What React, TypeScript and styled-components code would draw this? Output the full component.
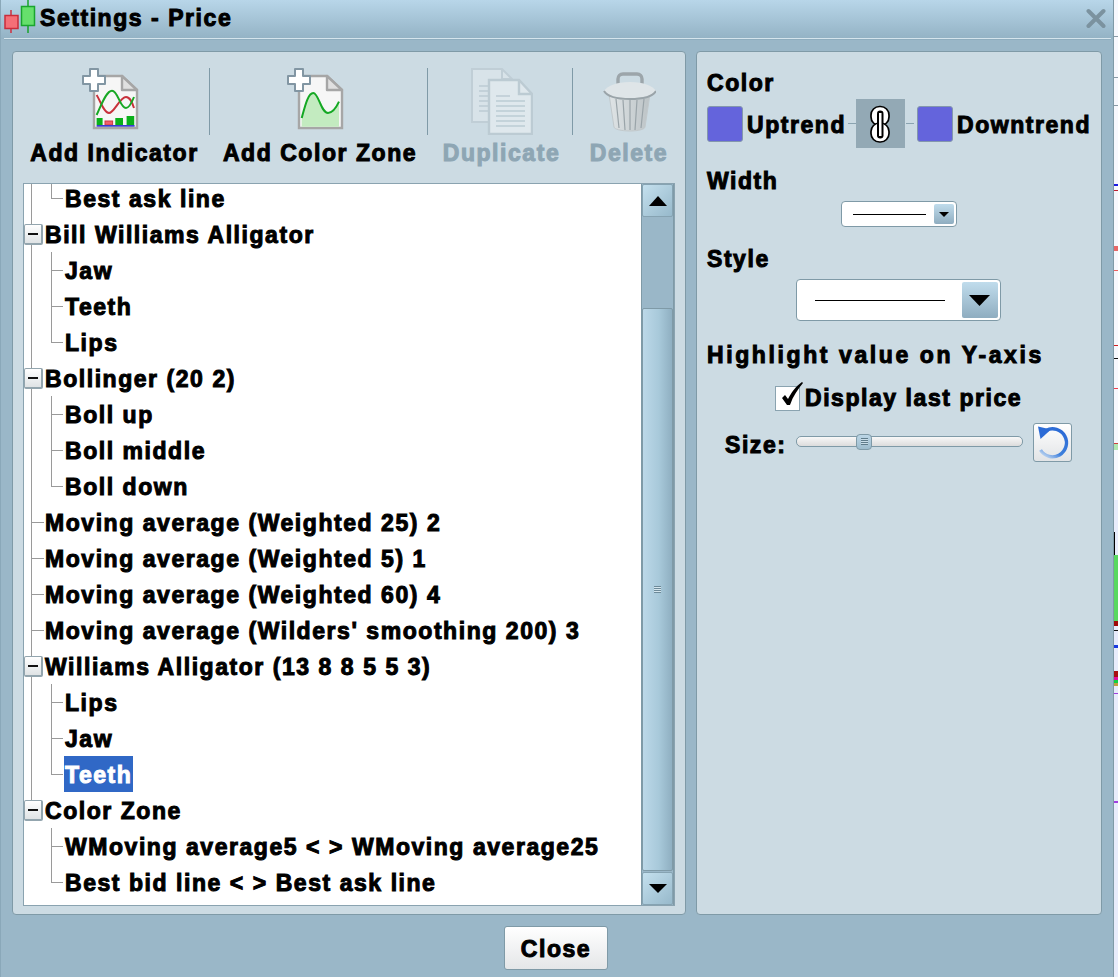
import React from "react";
import styled, { createGlobalStyle } from "styled-components";

const Global = createGlobalStyle`
  html, body { margin: 0; padding: 0; height: 100%; overflow: hidden; background: #9ab7c8; }
  * { box-sizing: border-box; }
  body { font-family: "Liberation Sans", Arial, sans-serif; }
`;

const heavy = `
  font-family: "Liberation Sans", Arial, sans-serif;
  font-weight: 700;
  font-size: 23px;
  letter-spacing: 1.55px;
  -webkit-text-stroke: 1px currentColor;
  white-space: nowrap;
  color: #000;
`;

const Page = styled.div`
  display: flex;
  width: 1118px;
  height: 977px;
`;
const Dialog = styled.div`
  width: 1114px;
  height: 977px;
  display: flex;
  flex-direction: column;
  background: #9ab7c8;
  border-right: 1px solid #7f9aa7;
  border-left: 1px solid #8aa8b9;
`;
const ChartEdge = styled.svg`
  width: 4px;
  height: 977px;
  display: block;
  flex: none;
`;
const TitleBar = styled.div`
  height: 39px;
  flex: none;
  display: flex;
  align-items: center;
  padding: 0 7px 3px 3px;
  background: linear-gradient(#b8d6e9, #93b2c4);
`;
const TitleText = styled.span`
  ${heavy}
  margin-left: 4px;
  flex: 1;
`;
const Rule = styled.div`
  height: 2px;
  flex: none;
  margin: -1px 2px 0 3px;
  background: #d4e4ec;
  border-bottom: 1px solid #8fadbe;
`;
const Body = styled.div`
  flex: none;
  height: 875px;
  display: flex;
  gap: 10px;
  padding: 11px 11px 0 11px;
`;
const Panel = styled.div`
  background: #ccdbe3;
  border: 1px solid #7f9aa7;
  border-radius: 4px;
`;
const LeftPanel = styled(Panel)`
  width: 674px;
  display: flex;
  flex-direction: column;
  padding: 0 10px 8px;
`;
const RightPanel = styled(Panel)`
  width: 406px;
  padding: 0 10px;
  display: flex;
  flex-direction: column;
`;
const Toolbar = styled.div`
  height: 131px;
  flex: none;
  display: flex;
  margin: 0 -10px;
  padding-top: 16px;
  padding-left: 7px;
`;
const Tool = styled.div<{ $w: number; $shift?: number }>`
  width: ${(p) => p.$w}px;
  padding-left: ${(p) => p.$shift ?? 0}px;
  display: flex;
  flex-direction: column;
  align-items: center;
  flex: none;
`;
const ToolIcon = styled.div`
  height: 67px;
  display: flex;
  align-items: flex-start;
  svg { display: block; }
`;
const ToolLabel = styled.div<{ $off?: boolean }>`
  ${heavy}
  margin-top: 3px;
  line-height: 30px;
  ${(p) => (p.$off ? "color: #8ea6b4;" : "")}
`;
const ToolSep = styled.div`
  width: 1px;
  height: 67px;
  flex: none;
  background: #7f9aa7;
`;
const Tree = styled.div`
  flex: 1;
  min-height: 0;
  display: flex;
  border: 1px solid #8aa3b0;
  background: #fff;
`;
const TreeList = styled.div`
  flex: 1;
  overflow: hidden;
`;
const TreeInner = styled.div`
  margin-top: -4px;
`;
const Row = styled.div<{ $child?: boolean }>`
  ${heavy}
  position: relative;
  height: 36px;
  line-height: 38px;
  padding-left: ${(p) => (p.$child ? 40 : 20)}px;
`;
const Trunk = styled.i<{ $half?: boolean }>`
  position: absolute;
  left: 7px;
  top: 0;
  width: 1px;
  height: ${(p) => (p.$half ? "18px" : "36px")};
  background: #9a9a9a;
`;
const BranchV = styled.i<{ $last?: boolean }>`
  position: absolute;
  left: 27px;
  top: 0;
  width: 1px;
  height: ${(p) => (p.$last ? "19px" : "36px")};
  background: #9a9a9a;
`;
const BranchH = styled.i<{ $x: number; $w: number }>`
  position: absolute;
  left: ${(p) => p.$x}px;
  top: 18px;
  width: ${(p) => p.$w}px;
  height: 1px;
  background: #9a9a9a;
`;
const Expander = styled.b`
  position: absolute;
  left: 0;
  top: 8px;
  width: 19px;
  height: 21px;
  border: 1px solid #93a5ae;
  border-right-width: 2px;
  border-bottom-width: 2px;
  border-radius: 2px;
  background: linear-gradient(#ffffff, #dfe3e5);
  &::after {
    content: "";
    position: absolute;
    left: 3px;
    top: 8px;
    width: 10px;
    height: 2px;
    background: #111;
  }
`;
const RowLabel = styled.span<{ $on?: boolean }>`
  display: inline-block;
  height: 36px;
  padding: 0 1px;
  ${(p) => (p.$on ? "background: #3068c6; color: #fff;" : "")}
`;
const Scroll = styled.div`
  width: 33px;
  flex: none;
  display: flex;
  flex-direction: column;
  background: #9ab7c8;
  border-left: 1px solid #7f9aa7;
  border-right: 1px solid #7f9aa7;
`;
const ScrollBtn = styled.div`
  height: 33px;
  flex: none;
  display: flex;
  align-items: center;
  justify-content: center;
  background: linear-gradient(135deg, #c4e0ee, #97b9cb);
  border: 1px solid #86a3b2;
  border-radius: 2px;
  svg { display: block; }
`;
const ScrollGap = styled.div`
  height: 91px;
  flex: none;
  background: #9ab7c8;
`;
const ScrollThumb = styled.div`
  flex: 1;
  display: flex;
  align-items: center;
  justify-content: center;
  background: linear-gradient(90deg, #bcd8e8, #a8c9da 55%, #8fafc1);
  border: 1px solid #7f9aa7;
  border-radius: 2px;
  margin-bottom: 1px;
`;
const Grip = styled.div`
  width: 7px;
  height: 7px;
  background: repeating-linear-gradient(#6d8a99 0 1px, #d5e6ee 1px 2px);
`;
const Heading = styled.div<{ $h: number; $mt: number; $wide?: boolean }>`
  ${heavy}
  height: ${(p) => p.$h}px;
  line-height: ${(p) => p.$h}px;
  margin-top: ${(p) => p.$mt}px;
  ${(p) => (p.$wide ? "letter-spacing: 2.6px;" : "")}
`;
const ColorRow = styled.div`
  display: flex;
  align-items: center;
  height: 49px;
  margin-top: 1px;
`;
const Swatch = styled.div<{ $gap?: number }>`
  width: 36px;
  height: 36px;
  flex: none;
  margin-left: ${(p) => p.$gap ?? 0}px;
  background: #6464dc;
  border: 1px solid #8397ad;
  border-radius: 3px;
`;
const ColorLabel = styled.span<{ $w: number }>`
  ${heavy}
  width: ${(p) => p.$w}px;
  flex: none;
  margin-left: 4px;
  padding-top: 4px;
`;
const Dash = styled.div<{ $gap: number }>`
  width: 8px;
  height: 1px;
  flex: none;
  margin-top: -1px;
  margin-left: ${(p) => p.$gap}px;
  background: #8aa3b0;
`;
const LinkBox = styled.div`
  width: 49px;
  height: 49px;
  flex: none;
  background: #93a9b5;
  svg { display: block; }
`;
const Select = styled.div<{ $w: number; $h: number; $pad: number; $nudge?: number }>`
  align-self: center;
  width: ${(p) => p.$w}px;
  height: ${(p) => p.$h}px;
  display: flex;
  align-items: center;
  flex: none;
  margin-top: 5px;
  margin-right: ${(p) => p.$nudge ?? 0}px;
  background: #fff;
  border: 1px solid #7f9aa7;
  border-radius: 4px;
  padding: 2px 2px 2px ${(p) => p.$pad}px;
`;
const SelectLine = styled.div<{ $gap: number }>`
  flex: 1;
  height: 1px;
  background: #000;
  margin-right: ${(p) => p.$gap}px;
`;
const SelectBtn = styled.div<{ $w: number }>`
  width: ${(p) => p.$w}px;
  height: 100%;
  flex: none;
  display: flex;
  align-items: center;
  justify-content: center;
  border-radius: 2px;
  background: linear-gradient(#c0dcec, #8fadc0);
  svg { display: block; }
`;
const CheckRow = styled.div`
  display: flex;
  align-items: center;
  height: 36px;
  margin-top: 10px;
  padding-left: 68px;
`;
const CheckBox = styled.div`
  position: relative;
  width: 25px;
  height: 25px;
  flex: none;
  margin-top: 1px;
  background: #fff;
  border: 1px solid #8aa3b0;
  svg { position: absolute; left: 2px; top: -6px; display: block; }
`;
const CheckLabel = styled.span`
  ${heavy}
  margin-left: 5px;
`;
const SizeRow = styled.div`
  display: flex;
  align-items: center;
  height: 40px;
  margin-top: 5px;
  padding-left: 18px;
`;
const SizeLabel = styled.span`
  ${heavy}
  width: 71px;
  flex: none;
  padding-top: 9px;
`;
const Slider = styled.div`
  position: relative;
  width: 227px;
  height: 11px;
  flex: none;
  border: 1px solid #7f9aa7;
  border-radius: 5px;
  background: linear-gradient(#f8f8f8, #dcdcdc);
`;
const SliderThumb = styled.div`
  position: absolute;
  left: 59px;
  top: -3px;
  width: 16px;
  height: 16px;
  display: flex;
  align-items: center;
  justify-content: center;
  border: 1px solid #7f9aa7;
  border-radius: 4px;
  background: linear-gradient(#bcd6e6, #9dbccd);
`;
const ThumbGrip = styled.div`
  width: 7px;
  height: 7px;
  background: repeating-linear-gradient(#5f7c8b 0 1px, #c9dde8 1px 2px);
`;
const ResetButton = styled.div`
  width: 39px;
  height: 39px;
  flex: none;
  margin-left: 10px;
  margin-top: 3px;
  border: 1px solid #7f9aa7;
  border-radius: 3px;
  background: linear-gradient(#ffffff, #e2e4e6);
  svg { display: block; }
`;
const Footer = styled.div`
  flex: 1;
  display: flex;
  justify-content: center;
  padding-top: 11px;
  padding-right: 2px;
`;
const CloseButton = styled.div`
  ${heavy}
  width: 104px;
  height: 44px;
  line-height: 44px;
  text-align: center;
  border: 1px solid #7f9aa7;
  border-radius: 3px;
  background: linear-gradient(#ffffff, #e4e6e8);
`;
const CandleSvg = styled.svg`
  display: block;
  flex: none;
  align-self: flex-start;
`;
const CloseSvg = styled.svg`
  display: block;
  flex: none;
`;
const BinSvg = styled.svg`
  margin-top: 4px;
`;

const CandleIcon = () => (
  <CandleSvg width="32" height="34" viewBox="0 0 32 34">
    <path d="M7 10v23" stroke="#cf2f3f" strokeWidth="1.5" />
    <rect x="1" y="15.5" width="13" height="13" fill="#f46f77" stroke="#c92c3b" strokeWidth="1.5" />
    <path d="M24 0v33" stroke="#17a32a" strokeWidth="1.5" />
    <rect x="17.5" y="6.5" width="13" height="19" fill="#66e06c" stroke="#1aa52e" strokeWidth="1.5" />
  </CandleSvg>
);

const Doc = () => (
  <>
    <path d="M12 8h28l15 14v38H12z" fill="#f6f6f6" stroke="#a6a6a6" strokeWidth="2.4" />
    <path d="M40 8v14h15z" fill="#e0e0e0" stroke="#a6a6a6" strokeWidth="2.4" strokeLinejoin="round" />
  </>
);
const Plus = () => (
  <path
    d="M8 1h8v7h7v8h-7v7H8v-7H1V8h7z"
    fill="#fff"
    stroke="#8296a3"
    strokeWidth="2"
    strokeLinejoin="round"
  />
);

const AddIndicatorIcon = () => (
  <svg width="66" height="64" viewBox="0 0 66 64">
    <Doc />
    <path d="M14.6 27C18 32 22 45 27 45S38 29 44 29C48 29 50 34 52 40" fill="none" stroke="#c8323c" strokeWidth="2" />
    <path d="M14.6 47C19 38 24 22.7 30 22.7S38 40 44 40C47 40 50 34 52 29" fill="none" stroke="#18a825" strokeWidth="2" />
    <rect x="14.6" y="50" width="6" height="7" fill="#0ab01a" />
    <rect x="23" y="53" width="7.6" height="4" fill="#f0606a" stroke="#cc3a44" />
    <rect x="33.3" y="50" width="7.7" height="7" fill="#0ab01a" />
    <rect x="44.6" y="48" width="7.6" height="9" fill="#0ab01a" />
    <rect x="14.6" y="57" width="38" height="1.7" fill="#3a3ad0" />
    <Plus />
  </svg>
);
const AddZoneIcon = () => (
  <svg width="66" height="64" viewBox="0 0 66 64">
    <Doc />
    <path d="M14.7 50C18 38 21 25 26.3 25S34 45 41 45C46 45 50 38 52 33.7V58.7H14.7z" fill="#c3ebc0" />
    <path d="M14.7 50C18 38 21 25 26.3 25S34 45 41 45C46 45 50 38 52 33.7" fill="none" stroke="#14a823" strokeWidth="2" />
    <Plus />
  </svg>
);
const DuplicateIcon = () => (
  <svg width="62" height="67" viewBox="0 0 62 67">
    <path d="M1 1h30l10 10v43H1z" fill="#d8e3e9" stroke="#c0ced6" strokeWidth="2" />
    <path d="M31 1v10h10" fill="none" stroke="#c0ced6" strokeWidth="2" />
    <path d="M8 18h10M8 23h10M8 28h10M8 33h10M8 38h10M8 43h10" stroke="#bccbd3" strokeWidth="1.5" />
    <path d="M18 12h30l13 14v40H18z" fill="#dfe8ed" stroke="#bccbd3" strokeWidth="2.4" />
    <path d="M48 12v14h13" fill="none" stroke="#bccbd3" strokeWidth="2.4" />
    <path d="M25 28h14" stroke="#bccbd3" strokeWidth="1.5" />
    <path d="M25 33h29M25 38h29M25 43h29M25 48h29M25 53h29M25 58h29" stroke="#bccbd3" strokeWidth="1.6" />
  </svg>
);
const DeleteIcon = () => (
  <BinSvg width="53" height="60" viewBox="0 0 53 60">
    <defs>
      <linearGradient id="bin" x1="0" x2="1" y1="0" y2="0">
        <stop offset="0" stopColor="#dfe4e6" />
        <stop offset="1" stopColor="#bcc3c6" />
      </linearGradient>
    </defs>
    <path d="M15 15V7c0-3 2-5 5-5h14c3 0 5 2 5 5v8" fill="none" stroke="#9ca5aa" strokeWidth="3.4" />
    <path d="M6 22l5 33c0 2 7 4 16 4s15-2 15-4l5-33z" fill="url(#bin)" stroke="#c2c9cc" />
    <path d="M1 19c3-5 12-9 26-9s23 4 26 9c-3 5-13 7-26 7S4 24 1 19z" fill="#dfe5e8" />
    <path d="M1 19c3 5 13 8 26 8s23-3 26-8" fill="none" stroke="#9aa4a9" strokeWidth="2" />
    <path d="M13 27l3 29M20 28l2 30M27 28v30M34 28l-2 30M41 27l-3 29" stroke="#9aa4a9" strokeWidth="1.2" />
  </BinSvg>
);
const Tri = ({ w, h, up }: { w: number; h: number; up?: boolean }) => (
  <svg width={w} height={h} viewBox={`0 0 ${w} ${h}`}>
    <path d={up ? `M0 ${h}L${w / 2} 0L${w} ${h}z` : `M0 0H${w}L${w / 2} ${h}z`} fill="#000" />
  </svg>
);
const LinkIcon = () => (
  <svg width="49" height="49" viewBox="0 0 49 49">
    <rect x="15" y="7.5" width="18" height="19" rx="8.5" fill="#fff" stroke="#000" strokeWidth="1.7" />
    <rect x="15" y="24" width="18" height="19" rx="8.5" fill="#fff" stroke="#000" strokeWidth="1.7" />
    <rect x="21" y="11.5" width="6.5" height="28" rx="3.2" fill="#000" />
    <rect x="23" y="14" width="2.5" height="23" fill="#fff" />
  </svg>
);
const CheckIcon = () => (
  <svg width="26" height="28" viewBox="0 0 26 28">
    <path d="M4 17l3-3 3 4C13 12 18 5 24 1l1 1C20 8 15 15 12 24H9z" fill="#000" />
  </svg>
);
const ResetIcon = () => (
  <svg width="37" height="37" viewBox="0 0 37 37">
    <defs>
      <linearGradient id="arc" x1="0.7" y1="0" x2="0.1" y2="1">
        <stop offset="0" stopColor="#2b6bd6" />
        <stop offset="0.65" stopColor="#3f80dc" />
        <stop offset="1" stopColor="#c8dcf2" />
      </linearGradient>
    </defs>
    <path d="M12 6.4A14 14 0 1 1 6.5 26" fill="none" stroke="url(#arc)" strokeWidth="3.4" />
    <path d="M4 2.5L17 5.5 6.5 15z" fill="#2b6bd6" />
  </svg>
);
const CloseX = () => (
  <CloseSvg width="20" height="21" viewBox="0 0 20 21">
    <path d="M2.5 3l15 15M17.5 3l-15 15" stroke="#7b929f" strokeWidth="4" strokeLinecap="round" />
  </CloseSvg>
);

type Item = { t: string; kind: "root" | "leaf" | "child"; last?: boolean; on?: boolean };
const items: Item[] = [
  { t: "Best ask line", kind: "child", last: true },
  { t: "Bill Williams Alligator", kind: "root" },
  { t: "Jaw", kind: "child" },
  { t: "Teeth", kind: "child" },
  { t: "Lips", kind: "child", last: true },
  { t: "Bollinger (20 2)", kind: "root" },
  { t: "Boll up", kind: "child" },
  { t: "Boll middle", kind: "child" },
  { t: "Boll down", kind: "child", last: true },
  { t: "Moving average (Weighted 25) 2", kind: "leaf" },
  { t: "Moving average (Weighted 5) 1", kind: "leaf" },
  { t: "Moving average (Weighted 60) 4", kind: "leaf" },
  { t: "Moving average (Wilders' smoothing 200) 3", kind: "leaf" },
  { t: "Williams Alligator (13 8 8 5 5 3)", kind: "root" },
  { t: "Lips", kind: "child" },
  { t: "Jaw", kind: "child" },
  { t: "Teeth", kind: "child", last: true, on: true },
  { t: "Color Zone", kind: "root", last: true },
  { t: "WMoving average5 < > WMoving average25", kind: "child" },
  { t: "Best bid line < > Best ask line", kind: "child", last: true },
];

export default function App() {
  return (
    <Page>
      <Global />
      <Dialog>
        <TitleBar>
          <CandleIcon />
          <TitleText>Settings - Price</TitleText>
          <CloseX />
        </TitleBar>
        <Rule />
        <Body>
          <LeftPanel>
            <Toolbar>
              <Tool $w={189}>
                <ToolIcon><AddIndicatorIcon /></ToolIcon>
                <ToolLabel>Add Indicator</ToolLabel>
              </Tool>
              <ToolSep />
              <Tool $w={217} $shift={3}>
                <ToolIcon><AddZoneIcon /></ToolIcon>
                <ToolLabel>Add Color Zone</ToolLabel>
              </Tool>
              <ToolSep />
              <Tool $w={144} $shift={3}>
                <ToolIcon><DuplicateIcon /></ToolIcon>
                <ToolLabel $off>Duplicate</ToolLabel>
              </Tool>
              <ToolSep />
              <Tool $w={112}>
                <ToolIcon><DeleteIcon /></ToolIcon>
                <ToolLabel $off>Delete</ToolLabel>
              </Tool>
            </Toolbar>
            <Tree>
              <TreeList>
                <TreeInner>
                  {items.map((it, i) => (
                    <Row key={i} $child={it.kind === "child"}>
                      {i < 17 && <Trunk />}
                      {i === 17 && <Trunk $half />}
                      {it.kind === "child" && (
                        <>
                          <BranchV $last={it.last} />
                          <BranchH $x={27} $w={12} />
                        </>
                      )}
                      {it.kind === "leaf" && <BranchH $x={7} $w={13} />}
                      {it.kind === "root" && <Expander />}
                      <RowLabel $on={it.on}>{it.t}</RowLabel>
                    </Row>
                  ))}
                </TreeInner>
              </TreeList>
              <Scroll>
                <ScrollBtn><Tri w={18} h={10} up /></ScrollBtn>
                <ScrollGap />
                <ScrollThumb><Grip /></ScrollThumb>
                <ScrollBtn><Tri w={18} h={9} /></ScrollBtn>
              </Scroll>
            </Tree>
          </LeftPanel>
          <RightPanel>
            <Heading $h={30} $mt={16}>Color</Heading>
            <ColorRow>
              <Swatch />
              <ColorLabel $w={100}>Uptrend</ColorLabel>
              <Dash $gap={1} />
              <LinkBox><LinkIcon /></LinkBox>
              <Dash $gap={1} />
              <Swatch $gap={3} />
              <ColorLabel $w={134}>Downtrend</ColorLabel>
            </ColorRow>
            <Heading $h={30} $mt={18}>Width</Heading>
            <Select $w={116} $h={26} $pad={11}>
              <SelectLine $gap={8} />
              <SelectBtn $w={20}><Tri w={10} h={5} /></SelectBtn>
            </Select>
            <Heading $h={30} $mt={17}>Style</Heading>
            <Select $w={205} $h={42} $pad={18} $nudge={2}>
              <SelectLine $gap={17} />
              <SelectBtn $w={36}><Tri w={21} h={11} /></SelectBtn>
            </Select>
            <Heading $h={30} $mt={19} $wide>Highlight value on Y-axis</Heading>
            <CheckRow>
              <CheckBox><CheckIcon /></CheckBox>
              <CheckLabel>Display last price</CheckLabel>
            </CheckRow>
            <SizeRow>
              <SizeLabel>Size:</SizeLabel>
              <Slider>
                <SliderThumb><ThumbGrip /></SliderThumb>
              </Slider>
              <ResetButton><ResetIcon /></ResetButton>
            </SizeRow>
          </RightPanel>
        </Body>
        <Footer>
          <CloseButton>Close</CloseButton>
        </Footer>
      </Dialog>
      <ChartEdge viewBox="0 0 4 977">
        <rect width="4" height="500" fill="#f7f8fd" />
        <rect y="500" width="4" height="477" fill="#e8ecfb" />
        <path d="M0 36.5h4M0 77.5h4M0 105.5h4" stroke="#8a9aa5" />
        <rect y="184" width="4" height="2" fill="#1a1ae0" />
        <rect y="190" width="4" height="1" fill="#c02030" />
        <rect y="246" width="4" height="5" fill="#e86868" />
        <rect y="270" width="4" height="1" fill="#f06060" />
        <rect y="345" width="4" height="1" fill="#d02020" />
        <rect y="358" width="4" height="1" fill="#111" />
        <rect y="388" width="4" height="1" fill="#f04050" />
        <rect y="443" width="4" height="1" fill="#d04040" />
        <rect y="444" width="4" height="6" fill="#b0e6b0" />
        <rect y="532" width="1" height="23" fill="#000" />
        <rect y="555" width="4" height="66" fill="#58d860" />
        <rect y="621" width="4" height="5" fill="#a00808" />
        <rect y="630" width="4" height="1" fill="#111" />
        <rect y="645" width="4" height="3" fill="#1a3ae0" />
        <rect y="671" width="4" height="6" fill="#a81010" />
        <rect y="677" width="4" height="3" fill="#e010a0" />
        <rect y="680" width="4" height="3" fill="#10d040" />
        <rect y="683" width="4" height="3" fill="#c0a040" />
        <rect y="693" width="4" height="1" fill="#a040e0" />
        <rect y="801" width="4" height="2" fill="#a040e0" />
      </ChartEdge>
    </Page>
  );
}
